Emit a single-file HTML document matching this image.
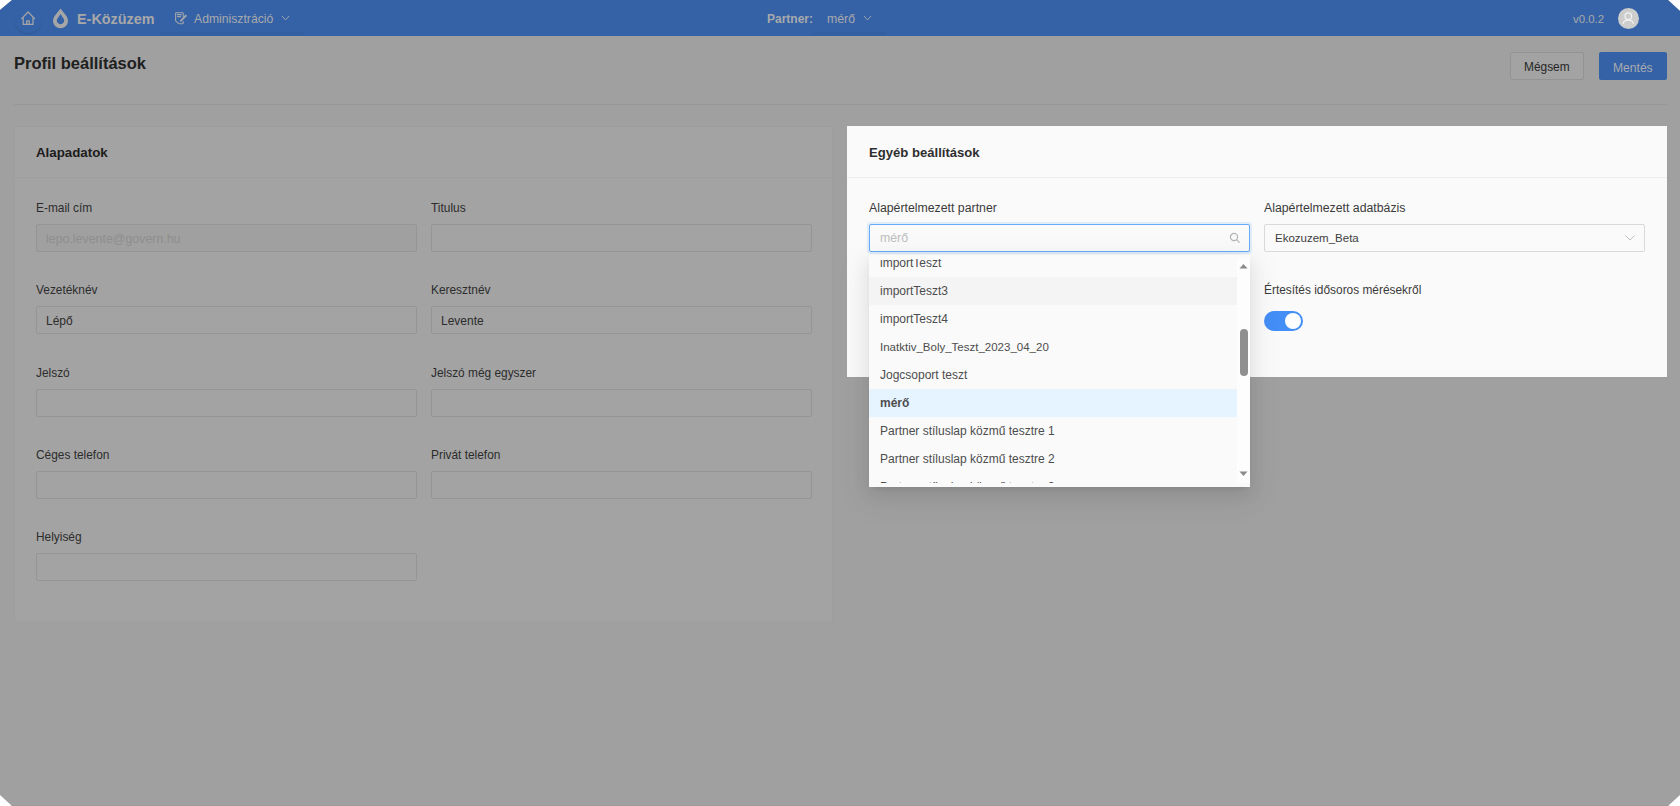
<!DOCTYPE html>
<html>
<head>
<meta charset="utf-8">
<style>
*{box-sizing:border-box;margin:0;padding:0}
html,body{width:1680px;height:806px;overflow:hidden;background:#fff}
body{font-family:"Liberation Sans",sans-serif;position:relative}
#app{position:absolute;left:0;top:0;width:1680px;height:806px;background:#a0a0a0;overflow:hidden;clip-path:polygon(12px 0,1668px 0,1680px 11px,1680px 795px,1668px 806px,12px 806px,0 795px,0 10px)}
.a{position:absolute;white-space:nowrap}
.hdr{position:absolute;left:0;top:0;width:1680px;height:36px;background:#3562a6}
.t{position:absolute;white-space:nowrap;line-height:1}
.inp{position:absolute;height:28px;border:1px solid #959595;border-radius:2px;background:#a3a3a3}
.lbl{position:absolute;white-space:nowrap;line-height:1;font-size:11.9px;color:#2c2c2c}
.item{position:absolute;left:0;width:368px;height:28px;font-size:12px;color:#4d4d4d;padding-left:11px;line-height:28px;white-space:nowrap}
</style>
</head>
<body>
<div id="app">
  <div class="hdr">
    <!-- home ring -->
    <div class="a" style="left:14px;top:5px;width:28px;height:28px;border-radius:50%;box-shadow:0 1px 1px rgba(0,0,0,0.10)"></div>
    <svg class="a" style="left:0;top:0" width="80" height="36" viewBox="0 0 80 36">
      <path d="M21.6 18.6 L28.1 12 L34.6 18.6 M23.2 17.2 V24.4 H33 V17.2 M26.7 24.4 V20.8 H29.2 V24.4" fill="none" stroke="#a5a5a5" stroke-width="1.25" stroke-linejoin="round" stroke-linecap="round"/>
      <path fill-rule="evenodd" fill="#a6a6a6" d="M60.5 8.6 L66.37 15.95 A7.55 7.55 0 1 1 54.63 15.95 Z M60.5 14.1 L63.5 18.6 A3.6 3.6 0 1 1 57.5 18.6 Z"/>
    </svg>
    <div class="t" style="left:77px;top:12px;font-size:14.4px;font-weight:bold;color:#a8a8a8">E-Közüzem</div>
    <svg class="a" style="left:0;top:0" width="200" height="36" viewBox="0 0 200 36">
      <path d="M175.6 20.8 V13.4 Q175.6 12.8 176.2 12.8 H182.6 Q183.2 12.8 183.2 13.4 V16.5 M175.6 20.8 L178.2 23.2 Q178.8 23.8 179.6 23.8 H182.4 Q183.2 23.8 183.2 23 V21.5 M177.4 14.6 H181.2 M177.4 16.6 H180.6" fill="none" stroke="#a0a5ad" stroke-width="1.1" stroke-linecap="round" stroke-linejoin="round"/>
      <path d="M181 20.6 L185.8 15.8" stroke="#a0a5ad" stroke-width="2" stroke-linecap="round"/>
      <path d="M180.4 21.6 L181.6 19.6" stroke="#a0a5ad" stroke-width="1" />
    </svg>
    <div class="t" style="left:194px;top:13px;font-size:12.2px;color:#a8a9ac">Adminisztráció</div>
    <svg class="a" style="left:281px;top:14px" width="9" height="8" viewBox="0 0 9 8"><path d="M1 2 L4.5 6 L8 2" fill="none" stroke="#9aa2ae" stroke-width="1"/></svg>
    <div class="a" style="left:161px;top:32px;width:142px;height:3px;background:rgba(0,0,0,0.035)"></div>
    <div class="a" style="left:812px;top:32px;width:74px;height:3px;background:rgba(0,0,0,0.035)"></div>
    <div class="t" style="left:767px;top:13px;font-size:12px;font-weight:bold;color:#a8a9ac">Partner:</div>
    <div class="t" style="left:827px;top:13px;font-size:12.3px;color:#a8a9ac">mérő</div>
    <svg class="a" style="left:863px;top:14px" width="9" height="8" viewBox="0 0 9 8"><path d="M1 2 L4.5 6 L8 2" fill="none" stroke="#9aa2ae" stroke-width="1"/></svg>
    <div class="t" style="left:1573px;top:14px;font-size:11.4px;color:#a8a9ac">v0.0.2</div>
    <div class="a" style="left:1618px;top:8px;width:21px;height:21px;border-radius:50%;background:#cdcdcd"></div>
    <svg class="a" style="left:1618px;top:8px" width="21" height="21" viewBox="0 0 21 21">
      <circle cx="10.3" cy="8.2" r="3.3" fill="none" stroke="#f2f2f2" stroke-width="1.2"/>
      <path d="M5.3 15.4 C5.9 10.9 14.7 10.9 15.3 15.4" fill="none" stroke="#f2f2f2" stroke-width="1.2" stroke-linecap="round"/>
    </svg>
  </div>

  <div class="t" style="left:14px;top:55px;font-size:16.5px;font-weight:bold;color:#202020">Profil beállítások</div>
  <div class="a" style="left:1510px;top:52px;width:74px;height:28px;border:1px solid #939393;border-radius:2px;background:#a3a3a3"></div>
  <div class="t" style="left:1524px;top:62px;font-size:11.9px;color:#262626">Mégsem</div>
  <div class="a" style="left:1599px;top:52px;width:68px;height:28px;border-radius:2px;background:#3562a6"></div>
  <div class="t" style="left:1613px;top:62px;font-size:12.1px;color:#a9abb0">Mentés</div>
  <div class="a" style="left:14px;top:104px;width:1653px;height:1px;background:#979797"></div>

  <div class="a" style="left:0;top:805px;width:1680px;height:1px;background:#9c9c9c"></div>
  <!-- left card -->
  <div class="a" style="left:14px;top:126px;width:819px;height:497px;background:#a3a3a3;border:1px solid #9e9e9e">
  </div>
  <div class="t" style="left:36px;top:146px;font-size:13.3px;font-weight:bold;color:#1c1c1c">Alapadatok</div>
  <div class="a" style="left:14px;top:177px;width:819px;height:1px;background:#9f9f9f"></div>

  <div class="lbl" style="left:36px;top:203px">E-mail cím</div>
  <div class="lbl" style="left:431px;top:203px">Titulus</div>
  <div class="inp" style="left:36px;top:224px;width:381px;background:#a0a0a0"></div>
  <div class="t" style="left:46px;top:233px;font-size:12.4px;color:#8e8e8e">lepo.levente@govern.hu</div>
  <div class="inp" style="left:431px;top:224px;width:381px"></div>

  <div class="lbl" style="left:36px;top:285px">Vezetéknév</div>
  <div class="lbl" style="left:431px;top:285px">Keresztnév</div>
  <div class="inp" style="left:36px;top:306px;width:381px"></div>
  <div class="t" style="left:46px;top:315px;font-size:12px;color:#2c2c2c">Lépő</div>
  <div class="inp" style="left:431px;top:306px;width:381px"></div>
  <div class="t" style="left:441px;top:315px;font-size:12px;color:#2c2c2c">Levente</div>

  <div class="lbl" style="left:36px;top:368px">Jelszó</div>
  <div class="lbl" style="left:431px;top:368px">Jelszó még egyszer</div>
  <div class="inp" style="left:36px;top:389px;width:381px"></div>
  <div class="inp" style="left:431px;top:389px;width:381px"></div>

  <div class="lbl" style="left:36px;top:450px">Céges telefon</div>
  <div class="lbl" style="left:431px;top:450px">Privát telefon</div>
  <div class="inp" style="left:36px;top:471px;width:381px"></div>
  <div class="inp" style="left:431px;top:471px;width:381px"></div>

  <div class="lbl" style="left:36px;top:532px">Helyiség</div>
  <div class="inp" style="left:36px;top:553px;width:381px"></div>

  <!-- right panel (highlighted) -->
  <div class="a" style="left:847px;top:126px;width:820px;height:251px;background:#fafafa"></div>
  <div class="t" style="left:869px;top:146px;font-size:13.1px;font-weight:bold;color:#2e2e2e">Egyéb beállítások</div>
  <div class="a" style="left:847px;top:177px;width:820px;height:1px;background:#efefef"></div>
  <div class="lbl" style="left:869px;top:202px;font-size:12.3px;color:#3a3a3a">Alapértelmezett partner</div>
  <div class="lbl" style="left:1264px;top:202px;font-size:12.3px;color:#3a3a3a">Alapértelmezett adatbázis</div>
  <div class="a" style="left:869px;top:224px;width:381px;height:28px;border:1px solid #66aafb;border-radius:2px;background:#fafafa;box-shadow:0 0 0 2px rgba(102,170,251,0.16)"></div>
  <div class="t" style="left:880px;top:232px;font-size:12.3px;color:#bdbdbd">mérő</div>
  <svg class="a" style="left:1229px;top:232px" width="12" height="12" viewBox="0 0 12 12"><circle cx="5" cy="5" r="3.6" fill="none" stroke="#b5b5b5" stroke-width="1.2"/><path d="M7.6 7.6 L10.6 10.6" stroke="#b5b5b5" stroke-width="1.2"/></svg>
  <div class="a" style="left:1264px;top:224px;width:381px;height:28px;border:1px solid #d9d9d9;border-radius:2px;background:#fafafa"></div>
  <div class="t" style="left:1275px;top:233px;font-size:11.5px;color:#404040">Ekozuzem_Beta</div>
  <svg class="a" style="left:1624px;top:233px" width="12" height="10" viewBox="0 0 12 10"><path d="M1.5 2.5 L6 7 L10.5 2.5" fill="none" stroke="#bfbfbf" stroke-width="1"/></svg>
  <div class="lbl" style="left:1264px;top:285px;font-size:11.9px;color:#3a3a3a">Értesítés idősoros mérésekről</div>
  <div class="a" style="left:1264px;top:311px;width:39px;height:20px;border-radius:10px;background:#438ef7"></div>
  <div class="a" style="left:1285px;top:313px;width:16px;height:16px;border-radius:50%;background:#fff"></div>

  <!-- dropdown -->
  <div class="a" style="left:869px;top:255px;width:381px;height:232px;background:#fafafa;box-shadow:0 3px 6px -4px rgba(0,0,0,.12),0 6px 16px 0 rgba(0,0,0,.08),0 9px 28px 8px rgba(0,0,0,.05)">
    <div class="a" style="left:0;top:4px;width:368px;height:224px;overflow:hidden">
      <div class="item" style="top:-10px">importTeszt</div>
      <div class="item" style="top:18px;background:#f4f4f4">importTeszt3</div>
      <div class="item" style="top:46px">importTeszt4</div>
      <div class="item" style="top:74px;font-size:11.5px">Inatktiv_Boly_Teszt_2023_04_20</div>
      <div class="item" style="top:102px">Jogcsoport teszt</div>
      <div class="item" style="top:130px;background:#e6f4ff;font-weight:bold">mérő</div>
      <div class="item" style="top:158px">Partner stíluslap közmű tesztre 1</div>
      <div class="item" style="top:186px">Partner stíluslap közmű tesztre 2</div>
      <div class="item" style="top:214px">Partner stíluslap közmű tesztre 3</div>
    </div>
    <div class="a" style="left:368px;top:4px;width:13px;height:224px;background:#fdfdfd"></div>
    <svg class="a" style="left:370px;top:8px" width="9" height="6" viewBox="0 0 9 6"><path d="M0.5 5.5 L4.5 1 L8.5 5.5 Z" fill="#8a8a8a"/></svg>
    <div class="a" style="left:371px;top:74px;width:8px;height:47px;border-radius:4px;background:#8f8f8f"></div>
    <svg class="a" style="left:370px;top:216px" width="9" height="6" viewBox="0 0 9 6"><path d="M0.5 0.5 L4.5 5 L8.5 0.5 Z" fill="#8a8a8a"/></svg>
  </div>
</div>
</body>
</html>
